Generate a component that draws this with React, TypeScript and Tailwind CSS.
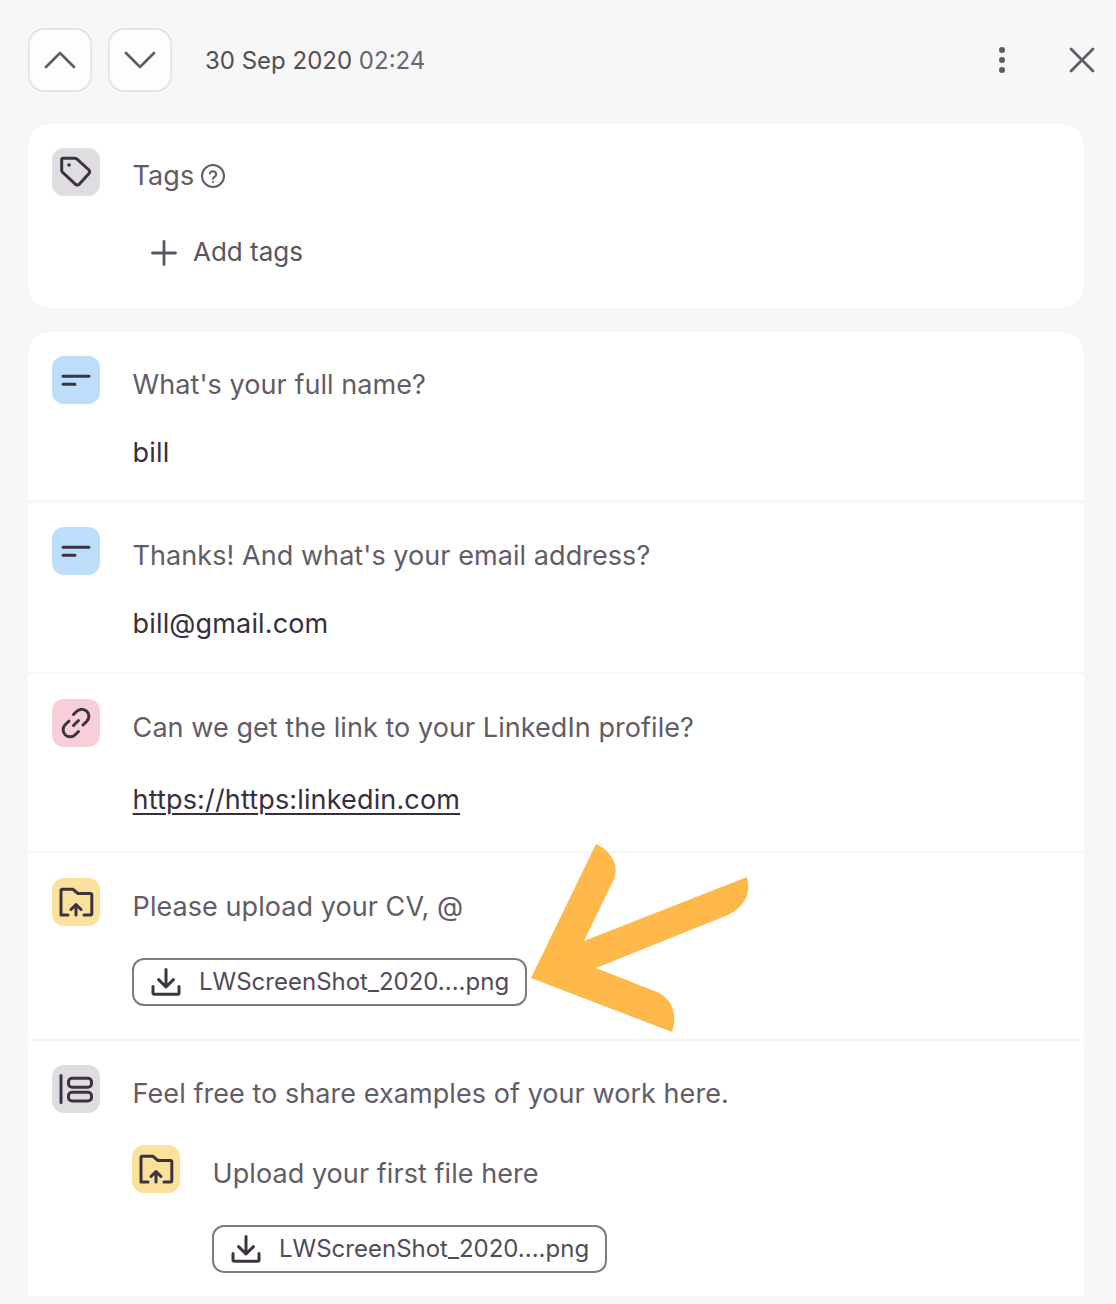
import React from "react";

const S = { fill: "none", stroke: "currentColor", strokeLinecap: "round" as const, strokeLinejoin: "round" as const };

function Box({ bg, children }: { bg: string; children: React.ReactNode }) {
  return (
    <div className={`w-12 h-12 shrink-0 rounded-xl text-[#3b3340] ${bg}`}>
      <svg width="48" height="48" viewBox="0 0 48 48" {...S} strokeWidth="3">{children}</svg>
    </div>
  );
}

const TagI = () => (
  <Box bg="bg-[#dfdde0]">
    <path d="M11 10.3H23a3 3 0 0 1 2 .9L37 22a2.4 2.4 0 0 1 0 3.4L27 36.4a2.4 2.4 0 0 1-3.4 0L10.6 24.4a2.4 2.4 0 0 1-.9-2V11.6a1.3 1.3 0 0 1 1.3-1.3Z" />
    <circle cx="17" cy="17" r="1.8" fill="currentColor" stroke="none" />
  </Box>
);
const LinesI = () => (
  <Box bg="bg-[#bddefa]">
    <path d="M11 20.3H37M11 28.3H23" />
  </Box>
);
const LinkI = () => (
  <Box bg="bg-[#f8ced9]">
    <path d="M21.5 15.5l3.3-3.3a7 7 0 0 1 10 10L31 26" />
    <path d="M26.5 32.5l-3.3 3.3a7 7 0 0 1-10-10L17 22" />
    <path d="M21.5 26.5l5-5" />
  </Box>
);
const FolderI = () => (
  <Box bg="bg-[#fbe19c]">
    <path d="M16 37H9V12.5a1.2 1.2 0 0 1 1.2-1.2H21l5 4.2h12.6a1.2 1.2 0 0 1 1.2 1.2V35.8a1.2 1.2 0 0 1-1.2 1.2H32" />
    <path d="M24 37V26.5M19 31.5l5-5 5 5" />
  </Box>
);
const ListI = () => (
  <Box bg="bg-[#dfdde0]">
    <path d="M9 10.5V37.5" />
    <rect x="16.5" y="13.3" width="23" height="9" rx="3.5" />
    <rect x="16.5" y="27.3" width="23" height="8.6" rx="3.5" />
  </Box>
);

function FileBtn() {
  return (
    <div className="flex items-center w-[395px] h-12 rounded-xl border-2 border-[#7f7a82] pl-[17px] text-2xl text-[#524b57]">
      <svg width="30" height="30" viewBox="0 0 30 30" {...S} strokeWidth="3" className="text-[#3b3340] shrink-0">
        <path d="M15 2.5V20M7.6 12.6 15 20l7.4-7.4M2 19.5V26a1.3 1.3 0 0 0 1.3 1.3h23.4A1.3 1.3 0 0 0 28 26v-6.5" />
      </svg>
      <span className="ml-[18px]">LWScreenShot_2020....png</span>
    </div>
  );
}

const Q = ({ children }: { children: React.ReactNode }) => (
  <div className="mt-2 h-10 pl-[0.6px] leading-[42px] text-[27px] tracking-[0.06px] text-[#615c66]">{children}</div>
);
const V = ({ children, cls = "" }: { children: React.ReactNode; cls?: string }) => (
  <div className={`h-10 pl-[0.6px] leading-[42px] text-[27px] tracking-[0.15px] text-[#372f3c] ${cls}`}>{children}</div>
);
const Divider = ({ h }: { h: string }) => <div className={`bg-[#f7f7f7] ${h}`} />;

export default function App() {
  return (
    <div className="relative w-[1116px] h-[1304px] overflow-hidden bg-[#f7f7f7] pt-7" style={{ fontFamily: "Inter, sans-serif" }}>
      <header className="flex items-center h-16 pl-7 pr-5">
        <button className="flex items-center justify-center w-16 h-16 rounded-2xl border-2 border-[#e6e5e6] bg-[#fdfdfd] text-[#5f5a64]">
          <svg width="32" height="20" viewBox="0 0 32 20" {...S} strokeWidth="2.7"><path d="M2 17 16 3l14 14" /></svg>
        </button>
        <button className="flex items-center justify-center w-16 h-16 ml-4 rounded-2xl border-2 border-[#e6e5e6] bg-[#fdfdfd] text-[#5f5a64]">
          <svg width="32" height="20" viewBox="0 0 32 20" {...S} strokeWidth="2.7"><path d="M2 3l14 14L30 3" /></svg>
        </button>
        <div className="ml-[33px] mt-[2px] text-2xl text-[#524c58]">30 Sep 2020 <span className="text-[#6a656f]">02:24</span></div>
        <div className="ml-auto flex items-center text-[#5f5a64]">
          <svg width="8" height="30" viewBox="0 0 8 30" fill="currentColor"><circle cx="4" cy="5" r="3" /><circle cx="4" cy="15" r="3" /><circle cx="4" cy="25" r="3" /></svg>
          <svg className="ml-[62px]" width="28" height="28" viewBox="0 0 28 28" {...S} strokeWidth="2.7"><path d="M3 3l22 22M25 3 3 25" /></svg>
        </div>
      </header>

      <main className="mt-8 mx-7 w-[1056px]">
        <section className="h-[184px] rounded-3xl bg-white px-6 pt-6 flex gap-8">
          <TagI />
          <div>
            <div className="mt-2 h-10 pl-[0.6px] flex items-center text-[27px] tracking-[0.06px] text-[#615c66]">
              <span className="leading-[44px]">Tags</span>
              <svg className="ml-[7px]" width="24" height="24" viewBox="0 0 24 24" {...S} strokeWidth="2"><circle cx="12" cy="12" r="11" /><path d="M8.8 9.4a3.3 3.3 0 0 1 6.4 1c0 2.2-3.2 2.6-3.2 4.4" /><circle cx="12" cy="18" r="1.1" fill="currentColor" stroke="none" /></svg>
            </div>
            <div className="flex items-center mt-9 ml-[19px] h-10 text-[26px] text-[#5a5560]">
              <svg width="26" height="26" viewBox="0 0 26 26" {...S} strokeWidth="2.8" className="shrink-0 translate-y-px"><path d="M13 1.5v23M1.5 13h23" /></svg>
              <span className="ml-4 leading-[46px]">Add tags</span>
            </div>
          </div>
        </section>

        <section className="mt-6 rounded-t-3xl bg-white overflow-hidden">
          <div className="h-[168px] px-6 pt-6 flex gap-8">
            <LinesI />
            <div><Q>What's your full name?</Q><V cls="mt-7">bill</V></div>
          </div>
          <Divider h="h-[3px]" />
          <div className="h-[169px] px-6 pt-6 flex gap-8">
            <LinesI />
            <div><Q>Thanks! And what's your email address?</Q><V cls="mt-7">bill@gmail.com</V></div>
          </div>
          <Divider h="h-[2px]" />
          <div className="h-[177px] px-6 pt-[25px] flex gap-8">
            <LinkI />
            <div><Q>Can we get the link to your LinkedIn profile?</Q><V cls="mt-8 underline underline-offset-[4px] decoration-2">https://https:linkedin.com</V></div>
          </div>
          <Divider h="h-[2px]" />
          <div className="h-[186px] px-6 pt-[25px] flex gap-8">
            <FolderI />
            <div><Q>Please upload your CV, @</Q><div className="mt-8"><FileBtn /></div></div>
          </div>
          <Divider h="h-[2px]" />
          <div className="h-[255px] px-6 pt-6 flex gap-8">
            <ListI />
            <div>
              <Q>Feel free to share examples of your work here.</Q>
              <div className="mt-8 flex gap-8">
                <FolderI />
                <div>
                  <Q>Upload your first file here</Q>
                  <div className="mt-8"><FileBtn /></div>
                </div>
              </div>
            </div>
          </div>
        </section>
      </main>

      <svg className="absolute left-0 top-0 pointer-events-none" width="1116" height="1304" viewBox="0 0 1116 1304">
        <path fill="#ffb94a" d="M531 978 596 844C610 850 622 866 612 883L584 941 747 877C751 893 745 907 728 915L596 968 657 992C672 999 678 1014 672 1032Z" />
      </svg>
    </div>
  );
}
